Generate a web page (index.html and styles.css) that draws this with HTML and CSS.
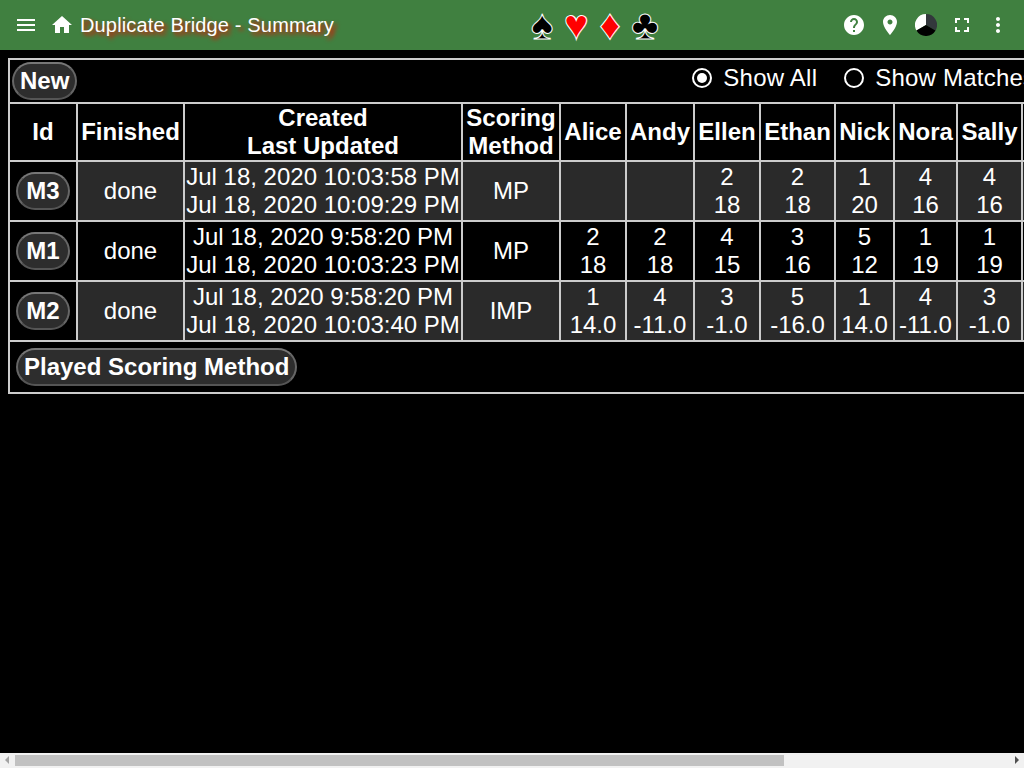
FILE: index.html
```html
<!DOCTYPE html>
<html lang="en">
<head>
<meta charset="utf-8">
<title>Duplicate Bridge - Summary</title>
<link rel="stylesheet" href="styles.css">
</head>
<body>
<header class="appbar">
  <div class="bar-left">
    <svg class="icon menu-icon" viewBox="0 0 24 24"><path d="M3 18h18v-2H3v2zm0-5h18v-2H3v2zm0-7v2h18V6H3z"/></svg>
    <svg class="icon home-icon" viewBox="0 0 24 24"><path d="M10 20v-6h4v6h5v-8h3L12 3 2 12h3v8z"/></svg>
    <span class="title">Duplicate Bridge - Summary</span>
  </div>
  <div class="suits"><span class="suit black">♠</span><span class="suit red">♥</span><span class="suit red">♦</span><span class="suit black">♣</span></div>
  <div class="bar-right">
    <svg class="icon" viewBox="0 0 24 24"><path d="M12 2C6.48 2 2 6.48 2 12s4.48 10 10 10 10-4.48 10-10S17.52 2 12 2zm1 17h-2v-2h2v2zm2.07-7.75l-.9.92C13.45 12.9 13 13.5 13 15h-2v-.5c0-1.1.45-2.1 1.17-2.83l1.24-1.26c.37-.36.59-.86.59-1.41 0-1.1-.9-2-2-2s-2 .9-2 2H8c0-2.21 1.79-4 4-4s4 1.79 4 4c0 .88-.36 1.68-.93 2.25z"/></svg>
    <svg class="icon" viewBox="0 0 24 24"><path d="M12 2C8.13 2 5 5.13 5 9c0 5.25 7 13 7 13s7-7.75 7-13c0-3.87-3.13-7-7-7zm0 9.5c-1.38 0-2.5-1.12-2.5-2.5s1.12-2.5 2.5-2.5 2.5 1.12 2.5 2.5-1.12 2.5-2.5 2.5z"/></svg>
    <svg class="icon pie" viewBox="0 0 22 22">
      <path fill="#fff" d="M11 11V0A11 11 0 0 0 1.47 16.5z"/>
      <path fill="#33383c" d="M11 11V0A11 11 0 0 1 20.53 16.5z"/>
      <path fill="#000" d="M11 11L20.53 16.5A11 11 0 0 1 1.47 16.5z"/>
    </svg>
    <svg class="icon" viewBox="0 0 24 24"><path d="M7 14H5v5h5v-2H7v-3zm-2-4h2V7h3V5H5v5zm12 7h-3v2h5v-5h-2v3zM14 5v2h3v3h2V5h-5z"/></svg>
    <svg class="icon" viewBox="0 0 24 24"><path d="M12 8c1.1 0 2-.9 2-2s-.9-2-2-2-2 .9-2 2 .9 2 2 2zm0 2c-1.1 0-2 .9-2 2s.9 2 2 2 2-.9 2-2-.9-2-2-2zm0 6c-1.1 0-2 .9-2 2s.9 2 2 2 2-.9 2-2-.9-2-2-2z"/></svg>
  </div>
</header>
<main class="content">
  <table class="summary">
    <colgroup>
      <col class="w-id"><col class="w-finished"><col class="w-dates"><col class="w-method">
      <col class="w-alice"><col class="w-andy"><col class="w-ellen"><col class="w-ethan">
      <col class="w-nick"><col class="w-nora"><col class="w-sally"><col class="w-rest">
    </colgroup>
    <thead>
      <tr>
        <th colspan="12" class="tools">
          <div class="tools-row">
            <button class="pill pill-new">New</button>
            <div class="filters">
              <label class="radio"><span class="dot on"></span>Show All</label>
              <label class="radio"><span class="dot"></span>Show Matches</label>
            </div>
          </div>
        </th>
      </tr>
      <tr>
        <th>Id</th><th>Finished</th><th>Created<br>Last Updated</th><th>Scoring<br>Method</th>
        <th>Alice</th><th>Andy</th><th>Ellen</th><th>Ethan</th><th>Nick</th><th>Nora</th><th>Sally</th><th class="rest"></th>
      </tr>
    </thead>
    <tbody>
      <tr class="odd">
        <td class="idcell"><button class="pill">M3</button></td><td>done</td><td>Jul 18, 2020 10:03:58 PM<br>Jul 18, 2020 10:09:29 PM</td><td>MP</td>
        <td></td><td></td><td>2<br>18</td><td>2<br>18</td><td>1<br>20</td><td>4<br>16</td><td>4<br>16</td><td class="rest"></td>
      </tr>
      <tr>
        <td class="idcell"><button class="pill">M1</button></td><td>done</td><td>Jul 18, 2020 9:58:20 PM<br>Jul 18, 2020 10:03:23 PM</td><td>MP</td>
        <td>2<br>18</td><td>2<br>18</td><td>4<br>15</td><td>3<br>16</td><td>5<br>12</td><td>1<br>19</td><td>1<br>19</td><td class="rest"></td>
      </tr>
      <tr class="odd">
        <td class="idcell"><button class="pill">M2</button></td><td>done</td><td>Jul 18, 2020 9:58:20 PM<br>Jul 18, 2020 10:03:40 PM</td><td>IMP</td>
        <td>1<br>14.0</td><td>4<br>-11.0</td><td>3<br>-1.0</td><td>5<br>-16.0</td><td>1<br>14.0</td><td>4<br>-11.0</td><td>3<br>-1.0</td><td class="rest"></td>
      </tr>
    </tbody>
    <tfoot>
      <tr><td colspan="12" class="foot"><button class="pill">Played Scoring Method</button></td></tr>
    </tfoot>
  </table>
</main>
<div class="hscroll">
  <span class="arrow arrow-left"></span>
  <div class="track"><div class="thumb"></div></div>
  <span class="arrow arrow-right"></span>
</div>
</body>
</html>
```
FILE: styles.css
```css
html, body {
  margin: 0;
  height: 100%;
  overflow: hidden;
  background: #000;
  color: #fff;
  font-family: "Liberation Sans", Arial, sans-serif;
}
.appbar {
  height: 50px;
  background: #408040;
  display: flex;
  align-items: center;
  justify-content: space-between;
  position: relative;
  padding: 0 14px;
}
.bar-left { display: flex; align-items: center; }
.icon { width: 24px; height: 24px; fill: #fff; display: block; }
.menu-icon { margin-right: 12px; }
.home-icon { margin-right: 6px; }
.title {
  font-size: 20px;
  line-height: 24px;
  letter-spacing: 0.0075em;
  text-shadow: 3px 3px 4px #e01000;
}
.suits {
  position: absolute;
  left: 531px;
  top: 0;
  height: 50px;
  display: flex;
  align-items: center;
  font-family: "Liberation Sans", sans-serif;
  font-size: 42px;
  line-height: 50px;
}
.suit { -webkit-text-stroke: 1px #fff; margin-right: 10.5px; }
.suit.black { color: #000; }
.suit.red { color: #f00; }
.bar-right { display: flex; align-items: center; gap: 12px; }
.icon.pie { width: 22px; height: 22px; margin: 0 1px; }
.content {
  padding: 8px;
  width: 1323px;
  box-sizing: border-box;
}
.summary {
  border-collapse: collapse;
  table-layout: fixed;
  width: 1307px;
  font-size: 24px;
  line-height: 28px;
  text-align: center;
}
.w-id { width: 68px; }
.w-finished { width: 107px; }
.w-dates { width: 278px; }
.w-method { width: 98px; }
.w-alice { width: 66px; }
.w-andy { width: 68px; }
.w-ellen { width: 66px; }
.w-ethan { width: 75px; }
.w-nick { width: 59px; }
.w-nora { width: 63px; }
.w-sally { width: 65px; }
.w-rest { width: 294px; }
.summary th, .summary td {
  border: 2px solid #ccc;
  white-space: nowrap;
}
.summary th { padding: 0; }
.summary td { padding: 1px 0; }
.summary .tools { height: 42px; text-align: left; font-weight: normal; padding: 0; }
.tools-row { display: flex; align-items: center; }
.filters {
  display: flex;
  align-items: center;
  margin-left: 613px;
  margin-bottom: 6px;
  gap: 27px;
  letter-spacing: 0.00938em;
}
.radio { display: flex; align-items: center; gap: 11px; }
.dot {
  width: 20px;
  height: 20px;
  border: 2px solid #fff;
  border-radius: 50%;
  box-sizing: border-box;
  position: relative;
}
.dot.on::after {
  content: "";
  position: absolute;
  inset: 3px;
  background: #fff;
  border-radius: 50%;
}
.odd td { background: #2a2a2a; }
.odd td.idcell { background: #000; }
.pill {
  font: bold 24px/28px "Liberation Sans", Arial, sans-serif;
  color: #fff;
  background: #2d2d2d;
  border: 2px solid #666;
  border-top-color: #777;
  border-bottom-color: #555;
  border-radius: 19px;
  padding: 3px 6px;
  display: block;
}
.pill-new { margin: 2px; }
.idcell .pill { margin: 0 auto; min-width: 54px; }
.summary .foot { text-align: left; padding: 6px; }
.hscroll {
  position: fixed;
  left: 0;
  right: 0;
  bottom: 0;
  height: 15px;
  background: #f1f1f1;
  display: flex;
  align-items: center;
}
.track { flex: 1; height: 11px; }
.thumb { width: 769px; height: 100%; background: #c1c1c1; }
.arrow { width: 15px; height: 15px; position: relative; flex: none; }
.arrow::after {
  content: "";
  position: absolute;
  top: 3px;
  border: 4px solid transparent;
}
.arrow-left::after { left: 1px; border-right-color: #a3a3a3; }
.arrow-right::after { right: 1px; border-left-color: #505050; }
```
